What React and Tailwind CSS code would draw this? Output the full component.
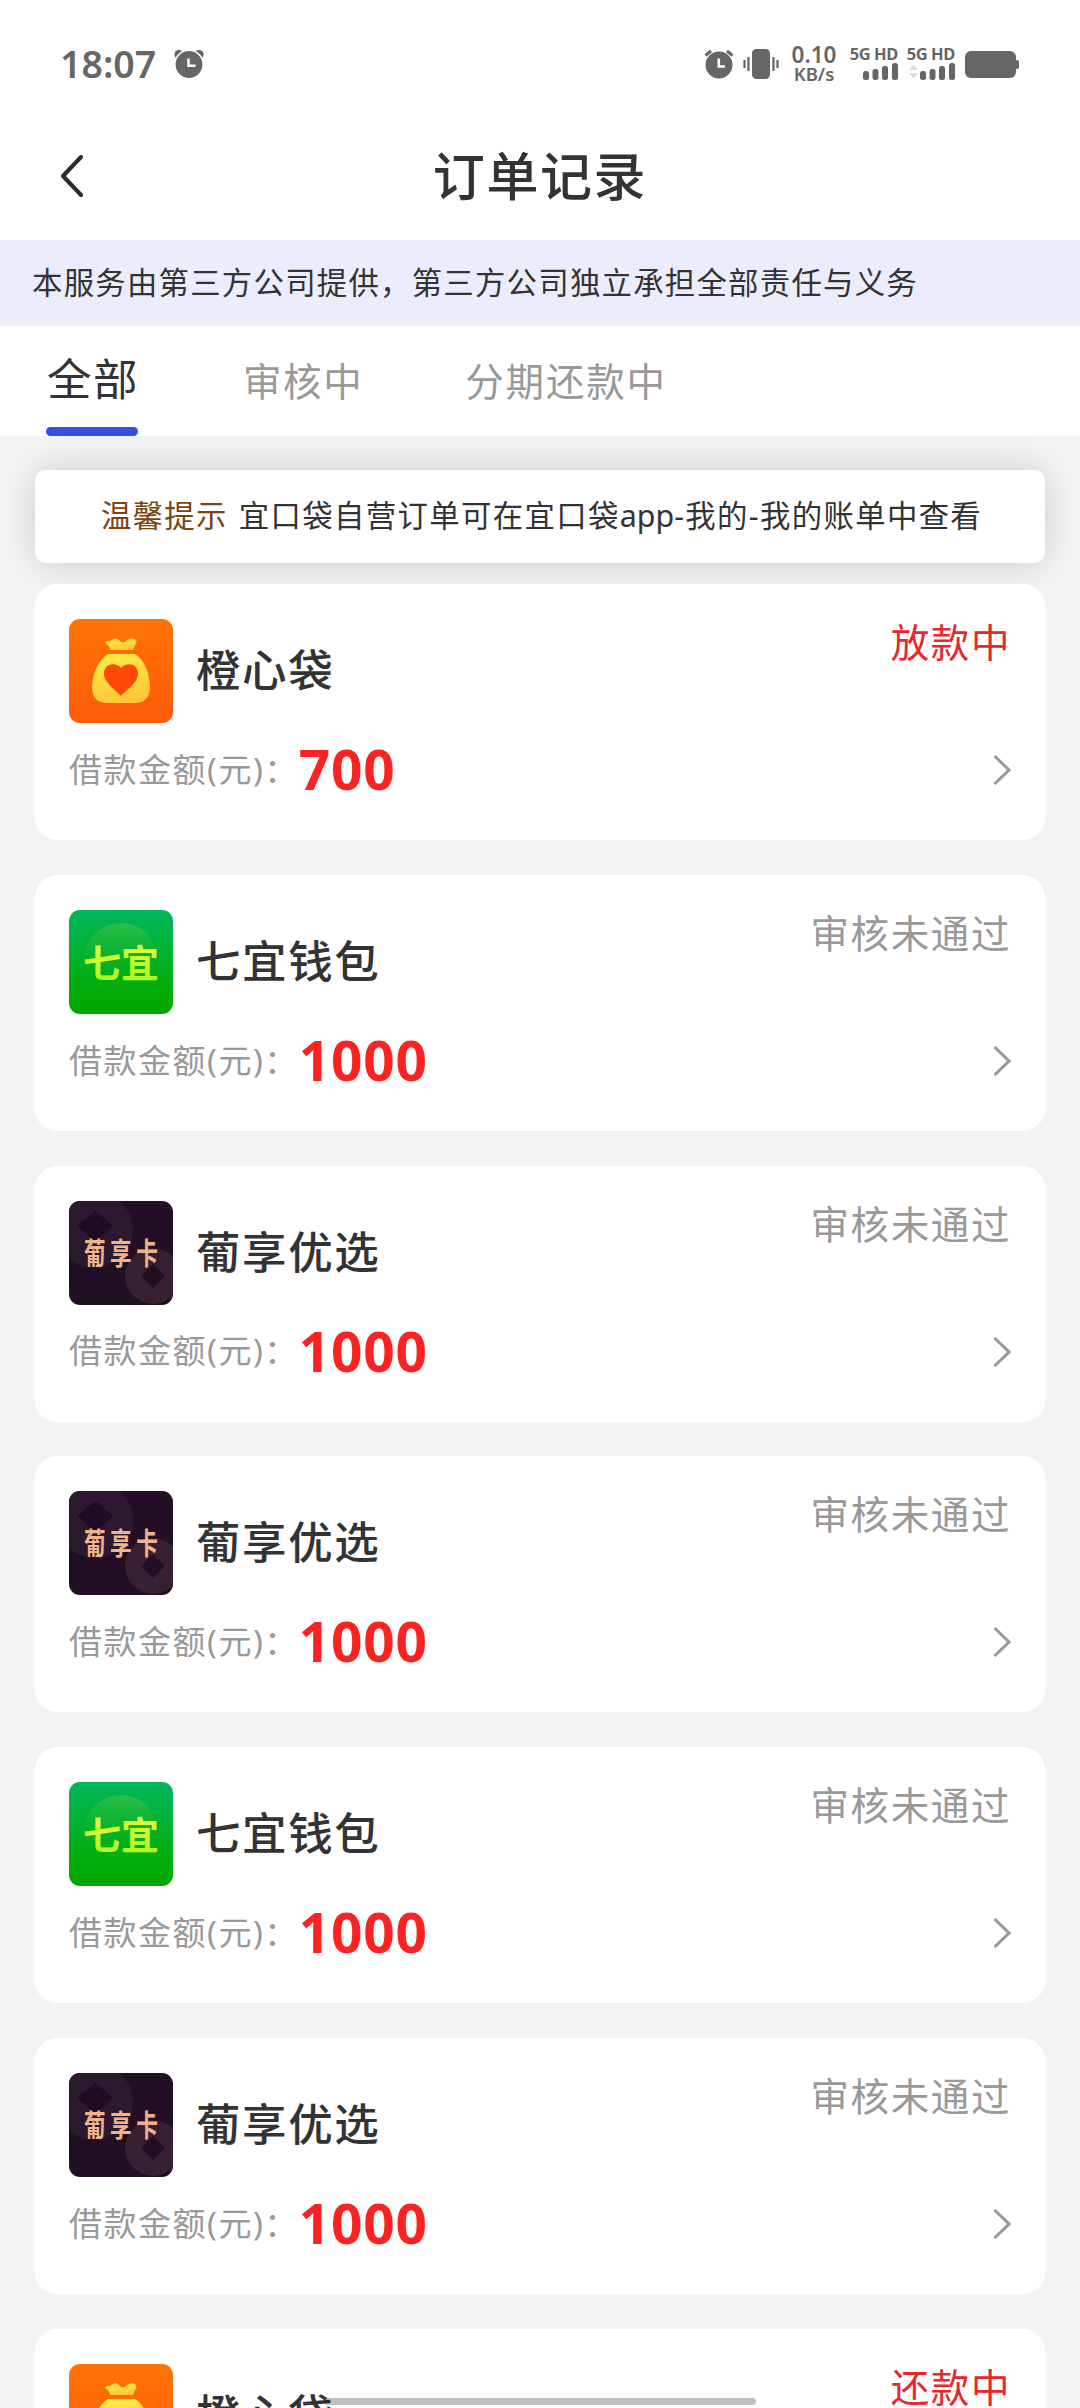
import React from 'react';

const orders = [
  { id: 1, name: '橙心袋', logo: 'cheng', amount: 700, status: '放款中', active: true },
  { id: 2, name: '七宜钱包', logo: 'qiyi', amount: 1000, status: '审核未通过' },
  { id: 3, name: '葡享优选', logo: 'pu', amount: 1000, status: '审核未通过' },
  { id: 4, name: '葡享优选', logo: 'pu', amount: 1000, status: '审核未通过' },
  { id: 5, name: '七宜钱包', logo: 'qiyi', amount: 1000, status: '审核未通过' },
  { id: 6, name: '葡享优选', logo: 'pu', amount: 1000, status: '审核未通过' },
  { id: 7, name: '橙心袋', logo: 'cheng', amount: 700, status: '还款中', active: true },
];

const ChengLogo = () => (
  <svg viewBox="0 0 104 104" className="w-full h-full">
    <defs>
      <linearGradient id="chengBg" x1="0" y1="0" x2="0" y2="1">
        <stop offset="0" stopColor="#ff7404" />
        <stop offset="1" stopColor="#ff5a0c" />
      </linearGradient>
      <linearGradient id="chengBag" x1="0" y1="0" x2="0.3" y2="1">
        <stop offset="0" stopColor="#ffee48" />
        <stop offset="1" stopColor="#ffc838" />
      </linearGradient>
    </defs>
    <rect width="104" height="104" fill="url(#chengBg)" />
    <path d="M36 24 Q37 21 41 22 L44 20 Q47 18 50 21 Q54 26 58 21 Q62 18 66 20 Q69 23 66 26 L64 31 H41 Q41 27 36 24 Z" fill="url(#chengBag)" />
    <path d="M39 35 H66 C76 41 81 56 81 69 Q80 84 66 84 H38 Q24 84 23 69 C23 56 29 41 39 35 Z" fill="url(#chengBag)" />
    <path d="M52 77 C48 72 35 64 35 55 C35 44 47 43 52 49 C57 43 69 44 69 55 C69 64 56 72 52 77 Z" fill="#ff4a05" />
  </svg>
);

const QiyiLogo = () => (
  <svg viewBox="0 0 104 104" className="w-full h-full">
    <defs>
      <linearGradient id="qiyiBg" x1="0" y1="0" x2="0" y2="1">
        <stop offset="0" stopColor="#00b75e" />
        <stop offset="0.75" stopColor="#00ad08" />
        <stop offset="1" stopColor="#00a600" />
      </linearGradient>
      <linearGradient id="qiyiGlow" x1="0" y1="0" x2="0" y2="1">
        <stop offset="0" stopColor="#4cc24a" stopOpacity="0.6" />
        <stop offset="0.8" stopColor="#00ad08" stopOpacity="0" />
      </linearGradient>
      <linearGradient id="qiyiText" x1="0" y1="0" x2="0" y2="1">
        <stop offset="0" stopColor="#f4ff40" />
        <stop offset="1" stopColor="#a0f51c" />
      </linearGradient>
    </defs>
    <rect width="104" height="104" fill="url(#qiyiBg)" />
    <circle cx="52" cy="50" r="37" fill="url(#qiyiGlow)" />
    <text x="52" y="66.5" textAnchor="middle" fontSize="38" fontWeight="700" fill="url(#qiyiText)">七宜</text>
  </svg>
);

const PuLogo = () => (
  <svg viewBox="0 0 104 104" className="w-full h-full">
    <rect width="104" height="104" fill="#220f26" />
    <circle cx="26" cy="29" r="38" fill="#2c192f" />
    <path d="M26 11 L43 25 L26 40 L10 25 Z" fill="#1f0c24" strokeLinejoin="round" stroke="#1f0c24" strokeWidth="2" />
    <circle cx="84" cy="75" r="28" fill="#362031" />
    <path d="M84 63 L96 75 L84 87 L72 75 Z" fill="#220f26" />
    <text transform="translate(15 62.5) scale(0.8 1.1)" fontSize="27" letterSpacing="5.6" fontWeight="700" fill="#f0b48c">葡享卡</text>
  </svg>
);

const AlarmIcon = ({ className }) => (
  <svg viewBox="0 0 30 30" className={className}>
    <circle cx="15" cy="16" r="13.5" fill="#666" />
    <path d="M1.5 6.5 L7 2 M28.5 6.5 L23 2" stroke="#666" strokeWidth="3" />
    <path d="M14.8 9.5 V17.5 H21" fill="none" stroke="#fff" strokeWidth="2.6" />
  </svg>
);

// clock shown next to the time, with round bells
const ClockIcon = ({ className }) => (
  <svg viewBox="0 0 30 30" className={className}>
    <circle cx="5" cy="5.5" r="4.6" fill="#666" />
    <circle cx="25" cy="5.5" r="4.6" fill="#666" />
    <circle cx="15" cy="15.5" r="14.2" fill="#666" stroke="#fff" strokeWidth="1.6" />
    <path d="M14.5 9.5 V16.8 H21.5" fill="none" stroke="#fff" strokeWidth="2.4" />
  </svg>
);

const Signal = ({ data }) => (
  <div className="flex flex-col items-end w-[47px] h-[34px]">
    <span className="text-[16.5px] leading-[14px] font-bold whitespace-nowrap tracking-[-0.4px]">5G HD</span>
    <svg viewBox="0 0 47 17" className="w-[47px] h-[17px] mt-[2px]">
      {data && <path d="M1 7 L5.5 1.5 L10 7 Z M1 10 L5.5 15.5 L10 10 Z" fill="#ddd" />}
      <rect x="12" y="8" width="6" height="9" rx="2.5" fill="#666" />
      <rect x="21.5" y="6" width="6" height="11" rx="2.5" fill="#666" />
      <rect x="31" y="3" width="6" height="14" rx="2.5" fill="#666" />
      <rect x="41" y="0" width="6" height="17" rx="2.5" fill="#666" />
    </svg>
  </div>
);

const StatusBar = () => (
  <div className="flex items-center h-[128px] pl-[60px] pr-[61px] text-[#666]">
    <span className="w-[98px] text-[37.5px] leading-none font-semibold whitespace-nowrap -mt-[1px]">18:07</span>
    <ClockIcon className="w-[30px] h-[30px] ml-[16px]" />
    <div className="flex items-center ml-auto">
      <AlarmIcon className="w-[30px] h-[30px]" />
      <svg viewBox="0 0 36 30" className="w-[36px] h-[30px] ml-[9px]">
        <rect x="9" y="0" width="18" height="30" rx="4.5" fill="#666" />
        <path d="M1.5 11 V19 M5.5 8 V22 M30.5 8 V22 M34.5 11 V19" stroke="#666" strokeWidth="2.2" />
      </svg>
      <div className="flex flex-col items-center w-[46px] ml-[12px] font-semibold">
        <span className="text-[22.5px] leading-[20px] -mt-[1px]">0.10</span>
        <span className="text-[18.5px] leading-[17px]">KB/s</span>
      </div>
      <div className="flex gap-[10px] ml-[14px]">
        <Signal />
        <Signal data />
      </div>
      <svg viewBox="0 0 54 28" className="w-[54px] h-[28px] ml-[10px] mt-[2px]">
        <rect x="0" y="0" width="51" height="27" rx="6" fill="#666" />
        <rect x="50" y="9" width="4" height="9" rx="2" fill="#666" />
      </svg>
    </div>
  </div>
);

const OrderCard = ({ order }) => (
  <div className="shrink-0 h-[256px] bg-white rounded-[22px] pt-[35px] px-[34px]">
    <div className="flex">
      <div className="w-[104px] h-[104px] rounded-[11px] overflow-hidden">
        {order.logo === 'cheng' && <ChengLogo />}
        {order.logo === 'qiyi' && <QiyiLogo />}
        {order.logo === 'pu' && <PuLogo />}
      </div>
      <h2 className="ml-[23px] h-[104px] text-[44.5px] leading-[101px] font-medium tracking-[1.6px] text-[#333]">{order.name}</h2>
      <span className={order.active ? 'ml-auto text-[38.5px] leading-[46px] tracking-[1.6px] text-[#e8262b]' : 'ml-auto text-[38.5px] leading-[46px] tracking-[1.6px] text-[#999]'}>
        {order.status}
      </span>
    </div>
    <div className="flex items-center h-[93px]">
      <span className="text-[33px] tracking-[1.5px] text-[#999]">借款金额(元)：</span>
      <span className="-mt-[2px] text-[55px] leading-none font-bold tracking-[0.8px] text-[#fb2222]">{order.amount}</span>
      <svg viewBox="0 0 18 30" className="w-[18px] h-[30px] ml-auto mt-[1px]" fill="none">
        <path d="M1.5 1 L16 15 L1.5 29" stroke="#999" strokeWidth="3" />
      </svg>
    </div>
  </div>
);

const App = () => {
  return (
    <div className="relative flex flex-col w-[1080px] h-[2408px] overflow-hidden bg-[#f3f3f3] font-['Noto_Sans','Noto_Sans_CJK_SC',sans-serif]">
      <div className="shrink-0 h-[240px] bg-white">
        <StatusBar />
        <div className="flex items-center h-[95px] pl-[61px] pr-[60px]">
          <svg viewBox="0 0 24 42" className="w-[24px] h-[42px]" fill="none">
            <path d="M20 2 L2 21 L20 40" stroke="#2a2a2a" strokeWidth="4" strokeLinecap="round" strokeLinejoin="round" />
          </svg>
          <h1 className="flex-1 mr-[25px] text-center text-[52px] leading-none font-medium tracking-[1.6px] text-[#333]">订单记录</h1>
        </div>
      </div>

      <div className="shrink-0 flex items-center h-[86px] pl-[32px] bg-[#ebedfc]">
        <p className="text-[30.4px] tracking-[1.25px] text-[#333]">本服务由第三方公司提供，第三方公司独立承担全部责任与义务</p>
      </div>

      <div className="shrink-0 flex h-[110px] pl-[46px] bg-white">
        <div className="flex flex-col justify-between w-[92px]">
          <span className="ml-[1px] h-[101px] text-[44.5px] leading-[105px] tracking-[1.6px] whitespace-nowrap text-[#333]">全部</span>
          <div className="h-[9px] rounded-[5px] bg-[#3450e4]" />
        </div>
        <span className="ml-[105px] text-[38.5px] leading-[110px] tracking-[1.6px] text-[#999]">审核中</span>
        <span className="ml-[102px] text-[38.5px] leading-[110px] tracking-[1.8px] text-[#999]">分期还款中</span>
      </div>

      <div className="flex flex-col px-[35px] pt-[34px]">
        <div className="shrink-0 flex items-center justify-center h-[93px] pl-[3px] pb-[2px] bg-white rounded-[11px] shadow-[0_0_36px_rgba(0,0,0,0.16)] text-[30.4px] tracking-[1.35px] whitespace-nowrap">
          <span className="text-[#7a4410]">温馨提示</span>
          <span className="ml-[11px] text-[#333]">宜口袋自营订单可在宜口袋<span className="tracking-normal">app</span>-我的-我的账单中查看</span>
        </div>
        <div className="flex flex-col gap-[34.8px] mt-[21px]">
          {orders.map((order) => (
            <OrderCard key={order.id} order={order} />
          ))}
        </div>
      </div>

      {/* gesture bar */}
      <div className="absolute left-[324px] top-[2398px] w-[432px] h-[7px] rounded-full bg-black/25" />
    </div>
  );
};

export default App;
